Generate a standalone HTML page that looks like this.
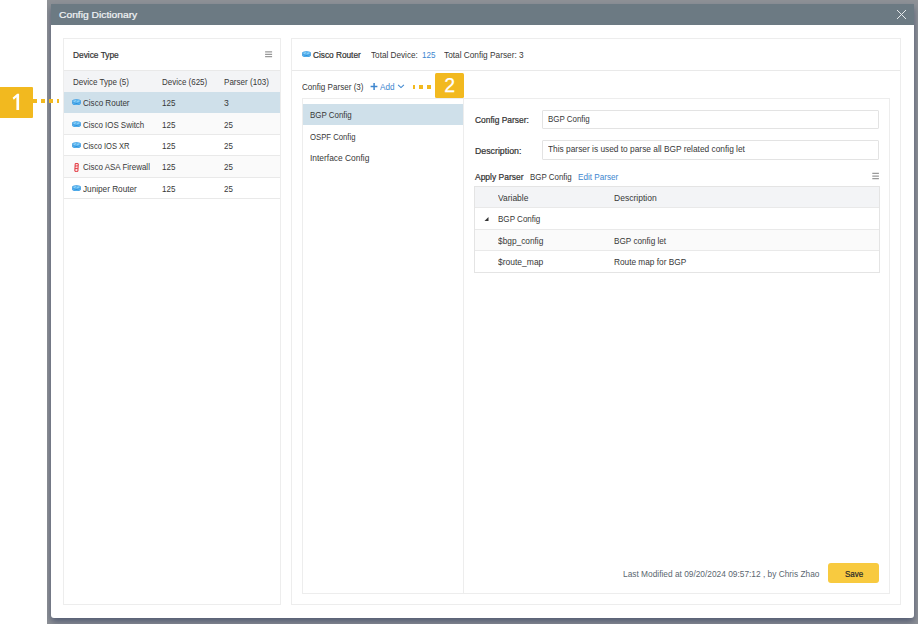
<!DOCTYPE html>
<html><head><meta charset="utf-8"><style>
html,body{margin:0;padding:0;width:918px;height:624px;overflow:hidden;background:#fff}
body{position:relative;font-family:"Liberation Sans",sans-serif}
.t{position:absolute;white-space:nowrap;line-height:1}
.r{position:absolute}
</style></head><body>
<div class="r" style="left:47px;top:0;width:871px;height:624px;overflow:hidden;background:#8f9297"><div class="r" style="left:4px;top:4px;width:863.3px;height:614px;background:#fff;border-radius:0 0 3px 3px;box-shadow:0 4px 7px rgba(25,40,80,.5)"></div></div>
<div class="r" style="left:51px;top:4px;width:863.3px;height:21px;background:#6c7a83"></div>
<div class="t" style="left:59.20px;top:10.00px;font-size:9.6px;font-weight:400;color:#f0f3f5;transform:scaleX(1.0711);transform-origin:0 0;-webkit-text-stroke:0.22px #f0f3f5;">Config Dictionary</div>
<svg class="r" style="left:896px;top:9px" width="11" height="11" viewBox="0 0 11 11"><path d="M1 1L10 10M10 1L1 10" stroke="#e6eaec" stroke-width="1"/></svg>
<div class="r" style="left:63px;top:38px;width:218px;height:567px;border:1px solid #ededed;box-sizing:border-box;background:#fff"></div>
<div class="r" style="left:64px;top:70px;width:216px;height:1px;background:#e9e9e9"></div>
<div class="t" style="left:73.00px;top:51.00px;font-size:8.7px;font-weight:400;color:#333;transform:scaleX(0.9600);transform-origin:0 0;-webkit-text-stroke:0.22px #333;">Device Type</div>
<svg class="r" style="left:265px;top:49px" width="10" height="10" viewBox="0 0 10 10"><path d="M0.10 2.90H7.10M0.10 5.30H7.10M0.10 7.60H7.10" stroke="#999" stroke-width="1.25"/></svg>
<div class="r" style="left:64px;top:71px;width:216px;height:20.5px;background:#f3f4f6"></div>
<div class="t" style="left:73.00px;top:78.00px;font-size:8.7px;font-weight:400;color:#383838;transform:scaleX(0.9217);transform-origin:0 0;">Device Type (5)</div>
<div class="t" style="left:161.90px;top:78.00px;font-size:8.7px;font-weight:400;color:#383838;transform:scaleX(0.9165);transform-origin:0 0;">Device (625)</div>
<div class="t" style="left:224.10px;top:78.00px;font-size:8.7px;font-weight:400;color:#383838;transform:scaleX(0.9286);transform-origin:0 0;">Parser (103)</div>
<div class="r" style="left:64px;top:91.5px;width:216px;height:21.400000000000006px;background:#cfe0ea"></div>
<svg class="r" style="left:72.00px;top:99.30px" width="9" height="6.3" viewBox="0 0 9 6.3"><path d="M0.2 2.1Q0.2 0.2 4.5 0.2Q8.8 0.2 8.8 2.1L8.8 4.2Q8.8 6.1 4.5 6.1Q0.2 6.1 0.2 4.2Z" fill="#2f8fdc"/><ellipse cx="4.5" cy="2.2" rx="4" ry="1.7" fill="#5fb8f0"/><path d="M1.8 2.6L3.8 1.6M5.2 2.8L7.2 1.8" stroke="#b8e2fa" stroke-width="0.7"/><path d="M0.6 4.4Q4.5 6.6 8.4 4.4" stroke="#66c3f5" stroke-width="0.8" fill="none"/></svg>
<div class="t" style="left:83.40px;top:99.00px;font-size:8.7px;font-weight:400;color:#383838;transform:scaleX(0.9268);transform-origin:0 0;">Cisco Router</div>
<div class="t" style="left:161.80px;top:99.00px;font-size:8.7px;font-weight:400;color:#383838;transform:scaleX(0.9229);transform-origin:0 0;">125</div>
<div class="t" style="left:223.80px;top:99.00px;font-size:8.7px;font-weight:400;color:#383838;transform:scaleX(0.9917);transform-origin:0 0;">3</div>
<div class="r" style="left:64px;top:112.9px;width:216px;height:21.400000000000006px;background:#fafafa"></div>
<svg class="r" style="left:72.00px;top:120.70px" width="9" height="6.3" viewBox="0 0 9 6.3"><path d="M0.2 2.1Q0.2 0.2 4.5 0.2Q8.8 0.2 8.8 2.1L8.8 4.2Q8.8 6.1 4.5 6.1Q0.2 6.1 0.2 4.2Z" fill="#2f8fdc"/><ellipse cx="4.5" cy="2.2" rx="4" ry="1.7" fill="#5fb8f0"/><path d="M1.8 2.6L3.8 1.6M5.2 2.8L7.2 1.8" stroke="#b8e2fa" stroke-width="0.7"/><path d="M0.6 4.4Q4.5 6.6 8.4 4.4" stroke="#66c3f5" stroke-width="0.8" fill="none"/></svg>
<div class="t" style="left:83.40px;top:121.00px;font-size:8.7px;font-weight:400;color:#383838;transform:scaleX(0.9122);transform-origin:0 0;">Cisco IOS Switch</div>
<div class="t" style="left:161.80px;top:121.00px;font-size:8.7px;font-weight:400;color:#383838;transform:scaleX(0.9229);transform-origin:0 0;">125</div>
<div class="t" style="left:223.80px;top:121.00px;font-size:8.7px;font-weight:400;color:#383838;transform:scaleX(0.9194);transform-origin:0 0;">25</div>
<div class="r" style="left:64px;top:134.3px;width:216px;height:21.400000000000006px;background:#fff"></div>
<svg class="r" style="left:72.00px;top:142.10px" width="9" height="6.3" viewBox="0 0 9 6.3"><path d="M0.2 2.1Q0.2 0.2 4.5 0.2Q8.8 0.2 8.8 2.1L8.8 4.2Q8.8 6.1 4.5 6.1Q0.2 6.1 0.2 4.2Z" fill="#2f8fdc"/><ellipse cx="4.5" cy="2.2" rx="4" ry="1.7" fill="#5fb8f0"/><path d="M1.8 2.6L3.8 1.6M5.2 2.8L7.2 1.8" stroke="#b8e2fa" stroke-width="0.7"/><path d="M0.6 4.4Q4.5 6.6 8.4 4.4" stroke="#66c3f5" stroke-width="0.8" fill="none"/></svg>
<div class="t" style="left:83.40px;top:142.00px;font-size:8.7px;font-weight:400;color:#383838;transform:scaleX(0.8684);transform-origin:0 0;">Cisco IOS XR</div>
<div class="t" style="left:161.80px;top:142.00px;font-size:8.7px;font-weight:400;color:#383838;transform:scaleX(0.9229);transform-origin:0 0;">125</div>
<div class="t" style="left:223.80px;top:142.00px;font-size:8.7px;font-weight:400;color:#383838;transform:scaleX(0.9194);transform-origin:0 0;">25</div>
<div class="r" style="left:64px;top:155.70000000000002px;width:216px;height:21.400000000000006px;background:#fafafa"></div>
<svg class="r" style="left:73.90px;top:162.60px" width="5" height="9" viewBox="0 0 5 9"><path d="M1.2 0.6Q3.2 0.2 4.3 0.8L3.9 8.3Q2.2 8.8 0.8 8.2Z" fill="#fbe3e4" stroke="#e0262f" stroke-width="0.9"/><path d="M1 3.1L4 2.8M0.9 5.6L3.9 5.4" stroke="#e0262f" stroke-width="0.8"/></svg>
<div class="t" style="left:83.40px;top:163.00px;font-size:8.7px;font-weight:400;color:#383838;transform:scaleX(0.9177);transform-origin:0 0;">Cisco ASA Firewall</div>
<div class="t" style="left:161.80px;top:163.00px;font-size:8.7px;font-weight:400;color:#383838;transform:scaleX(0.9229);transform-origin:0 0;">125</div>
<div class="t" style="left:223.80px;top:163.00px;font-size:8.7px;font-weight:400;color:#383838;transform:scaleX(0.9194);transform-origin:0 0;">25</div>
<div class="r" style="left:64px;top:177.10000000000002px;width:216px;height:21.400000000000006px;background:#fff"></div>
<svg class="r" style="left:72.00px;top:184.90px" width="9" height="6.3" viewBox="0 0 9 6.3"><path d="M0.2 2.1Q0.2 0.2 4.5 0.2Q8.8 0.2 8.8 2.1L8.8 4.2Q8.8 6.1 4.5 6.1Q0.2 6.1 0.2 4.2Z" fill="#2f8fdc"/><ellipse cx="4.5" cy="2.2" rx="4" ry="1.7" fill="#5fb8f0"/><path d="M1.8 2.6L3.8 1.6M5.2 2.8L7.2 1.8" stroke="#b8e2fa" stroke-width="0.7"/><path d="M0.6 4.4Q4.5 6.6 8.4 4.4" stroke="#66c3f5" stroke-width="0.8" fill="none"/></svg>
<div class="t" style="left:83.40px;top:185.00px;font-size:8.7px;font-weight:400;color:#383838;transform:scaleX(0.9446);transform-origin:0 0;">Juniper Router</div>
<div class="t" style="left:161.80px;top:185.00px;font-size:8.7px;font-weight:400;color:#383838;transform:scaleX(0.9229);transform-origin:0 0;">125</div>
<div class="t" style="left:223.80px;top:185.00px;font-size:8.7px;font-weight:400;color:#383838;transform:scaleX(0.9194);transform-origin:0 0;">25</div>
<div class="r" style="left:64px;top:134px;width:216px;height:1px;background:#e9e9e9"></div>
<div class="r" style="left:64px;top:155px;width:216px;height:1px;background:#e9e9e9"></div>
<div class="r" style="left:64px;top:177px;width:216px;height:1px;background:#e9e9e9"></div>
<div class="r" style="left:64px;top:198px;width:216px;height:1px;background:#e9e9e9"></div>
<div class="r" style="left:291px;top:38px;width:610px;height:567px;border:1px solid #ededed;box-sizing:border-box;background:#fff"></div>
<div class="r" style="left:292px;top:70px;width:608px;height:1px;background:#e9e9e9"></div>
<svg class="r" style="left:301.60px;top:50.90px" width="9" height="6.3" viewBox="0 0 9 6.3"><path d="M0.2 2.1Q0.2 0.2 4.5 0.2Q8.8 0.2 8.8 2.1L8.8 4.2Q8.8 6.1 4.5 6.1Q0.2 6.1 0.2 4.2Z" fill="#2f8fdc"/><ellipse cx="4.5" cy="2.2" rx="4" ry="1.7" fill="#5fb8f0"/><path d="M1.8 2.6L3.8 1.6M5.2 2.8L7.2 1.8" stroke="#b8e2fa" stroke-width="0.7"/><path d="M0.6 4.4Q4.5 6.6 8.4 4.4" stroke="#66c3f5" stroke-width="0.8" fill="none"/></svg>
<div class="t" style="left:313.10px;top:51.00px;font-size:8.7px;font-weight:400;color:#333;transform:scaleX(0.9507);transform-origin:0 0;-webkit-text-stroke:0.22px #333;">Cisco Router</div>
<div class="t" style="left:370.60px;top:51.00px;font-size:8.7px;font-weight:400;color:#383838;transform:scaleX(0.9418);transform-origin:0 0;">Total Device:</div>
<div class="t" style="left:421.50px;top:51.00px;font-size:8.7px;font-weight:400;color:#3d86cf;transform:scaleX(0.9298);transform-origin:0 0;">125</div>
<div class="t" style="left:444.00px;top:51.00px;font-size:8.7px;font-weight:400;color:#383838;transform:scaleX(0.9527);transform-origin:0 0;">Total Config Parser: 3</div>
<div class="t" style="left:302.30px;top:83.00px;font-size:8.7px;font-weight:400;color:#383838;transform:scaleX(0.9300);transform-origin:0 0;">Config Parser (3)</div>
<svg class="r" style="left:370px;top:82px" width="9" height="9" viewBox="0 0 9 9"><path d="M0.6 4.5H7.4M4.1 1.1V7.9" stroke="#3d86cf" stroke-width="1.5"/></svg>
<div class="t" style="left:379.60px;top:83.00px;font-size:8.7px;font-weight:400;color:#3d86cf;transform:scaleX(0.9367);transform-origin:0 0;">Add</div>
<svg class="r" style="left:397px;top:83px" width="8" height="6" viewBox="0 0 8 6"><path d="M1.1 1.8L4 4.6L6.9 1.8" stroke="#3d86cf" stroke-width="1.05" fill="none"/></svg>
<div class="r" style="left:302px;top:98px;width:588px;height:496px;border:1px solid #ededed;box-sizing:border-box;background:#fff"></div>
<div class="r" style="left:463px;top:99px;width:1px;height:494px;background:#ededed"></div>
<div class="r" style="left:303px;top:104px;width:160px;height:21px;background:#cfe0ea"></div>
<div class="t" style="left:310.40px;top:111.00px;font-size:8.7px;font-weight:400;color:#383838;transform:scaleX(0.9131);transform-origin:0 0;">BGP Config</div>
<div class="t" style="left:310.40px;top:133.00px;font-size:8.7px;font-weight:400;color:#383838;transform:scaleX(0.8878);transform-origin:0 0;">OSPF Config</div>
<div class="t" style="left:310.40px;top:154.00px;font-size:8.7px;font-weight:400;color:#383838;transform:scaleX(0.9671);transform-origin:0 0;">Interface Config</div>
<div class="t" style="left:474.90px;top:116.00px;font-size:8.7px;font-weight:400;color:#333;transform:scaleX(0.9710);transform-origin:0 0;-webkit-text-stroke:0.22px #333;">Config Parser:</div>
<div class="r" style="left:542px;top:109.5px;width:337px;height:19.69999999999999px;border:1px solid #e3e3e3;box-sizing:border-box;border-radius:1px"></div>
<div class="t" style="left:547.80px;top:115.00px;font-size:8.7px;font-weight:400;color:#383838;transform:scaleX(0.9131);transform-origin:0 0;">BGP Config</div>
<div class="t" style="left:474.90px;top:147.00px;font-size:8.7px;font-weight:400;color:#333;transform:scaleX(1.0102);transform-origin:0 0;-webkit-text-stroke:0.22px #333;">Description:</div>
<div class="r" style="left:542px;top:140.2px;width:337px;height:19.600000000000023px;border:1px solid #e3e3e3;box-sizing:border-box;border-radius:1px"></div>
<div class="t" style="left:547.80px;top:145.00px;font-size:8.7px;font-weight:400;color:#383838;transform:scaleX(0.9603);transform-origin:0 0;">This parser is used to parse all BGP related config let</div>
<div class="t" style="left:474.50px;top:173.00px;font-size:8.7px;font-weight:400;color:#333;transform:scaleX(0.9759);transform-origin:0 0;-webkit-text-stroke:0.22px #333;">Apply Parser</div>
<div class="t" style="left:530.20px;top:173.00px;font-size:8.7px;font-weight:400;color:#383838;transform:scaleX(0.9109);transform-origin:0 0;">BGP Config</div>
<div class="t" style="left:577.80px;top:173.00px;font-size:8.7px;font-weight:400;color:#3d86cf;transform:scaleX(0.9366);transform-origin:0 0;">Edit Parser</div>
<svg class="r" style="left:872px;top:171px" width="9" height="10" viewBox="0 0 9 10"><path d="M0.30 2.40H6.90M0.30 5.20H6.90M0.30 7.50H6.90" stroke="#999" stroke-width="1.25"/></svg>
<div class="r" style="left:474px;top:186px;width:406px;height:86.5px;border:1px solid #e4e4e4;box-sizing:border-box;background:#fff"></div>
<div class="r" style="left:475px;top:187px;width:404px;height:20.5px;background:#f3f4f6"></div>
<div class="r" style="left:475px;top:207px;width:404px;height:1px;background:#e9e9e9"></div>
<div class="r" style="left:475px;top:229px;width:404px;height:1px;background:#e9e9e9"></div>
<div class="r" style="left:475px;top:230px;width:404px;height:20.5px;background:#fafafa"></div>
<div class="r" style="left:475px;top:250.3px;width:404px;height:1.0px;background:#e9e9e9"></div>
<div class="t" style="left:497.60px;top:194.00px;font-size:8.7px;font-weight:400;color:#383838;transform:scaleX(0.9722);transform-origin:0 0;">Variable</div>
<div class="t" style="left:613.60px;top:194.00px;font-size:8.7px;font-weight:400;color:#383838;transform:scaleX(0.9812);transform-origin:0 0;">Description</div>
<svg class="r" style="left:483.5px;top:216.8px" width="5" height="4.5" viewBox="0 0 5 4.5"><path d="M4.5 0L4.5 4.2L0.3 4.2Z" fill="#333"/></svg>
<div class="t" style="left:497.60px;top:215.00px;font-size:8.7px;font-weight:400;color:#383838;transform:scaleX(0.9262);transform-origin:0 0;">BGP Config</div>
<div class="t" style="left:497.60px;top:237.00px;font-size:8.7px;font-weight:400;color:#383838;transform:scaleX(0.9576);transform-origin:0 0;">$bgp_config</div>
<div class="t" style="left:613.70px;top:237.00px;font-size:8.7px;font-weight:400;color:#383838;transform:scaleX(0.9414);transform-origin:0 0;">BGP config let</div>
<div class="t" style="left:497.60px;top:258.00px;font-size:8.7px;font-weight:400;color:#383838;transform:scaleX(0.9778);transform-origin:0 0;">$route_map</div>
<div class="t" style="left:613.70px;top:258.00px;font-size:8.7px;font-weight:400;color:#383838;transform:scaleX(0.9523);transform-origin:0 0;">Route map for BGP</div>
<div class="t" style="left:623.30px;top:570.00px;font-size:8.7px;font-weight:400;color:#5b6770;transform:scaleX(0.9592);transform-origin:0 0;">Last Modified at 09/20/2024 09:57:12 , by Chris Zhao</div>
<div class="r" style="left:828.4px;top:563.4px;width:50.700000000000045px;height:20.0px;background:#f8ca3f;border-radius:3px"></div>
<div class="t" style="left:844.60px;top:570.00px;font-size:8.7px;font-weight:400;color:#2a2a2a;transform:scaleX(0.9178);transform-origin:0 0;-webkit-text-stroke:0.22px #2a2a2a;">Save</div>
<div class="r" style="left:0px;top:87px;width:33px;height:31px;background:#f2b91f;border-radius:0 1px 1px 0"></div>
<svg class="r" style="left:0;top:0" width="30" height="120" viewBox="0 0 30 120"><path d="M19.1 93.8L19.1 109.9L16.4 109.9L16.4 97.3L13.8 99.8L12.6 97.8L17.2 93.8Z" fill="#fff"/></svg>
<div class="r" style="left:33px;top:99px;width:4px;height:4px;background:#f2b91f"></div>
<div class="r" style="left:41px;top:99px;width:4px;height:4px;background:#f2b91f"></div>
<div class="r" style="left:49px;top:99px;width:4px;height:4px;background:#f2b91f"></div>
<div class="r" style="left:57px;top:99px;width:2px;height:4px;background:#f2b91f"></div>
<div class="r" style="left:435px;top:73px;width:29.30000000000001px;height:25.200000000000003px;background:#f2b91f;border-radius:1.5px"></div>
<div class="t" style="left:444.30px;top:76.00px;font-size:19.5px;font-weight:400;color:#fff;-webkit-text-stroke:0.25px #fff;">2</div>
<div class="r" style="left:413px;top:85px;width:2px;height:4px;background:#f2b91f"></div>
<div class="r" style="left:419px;top:85px;width:4px;height:4px;background:#f2b91f"></div>
<div class="r" style="left:427px;top:85px;width:4px;height:4px;background:#f2b91f"></div>
</body></html>
